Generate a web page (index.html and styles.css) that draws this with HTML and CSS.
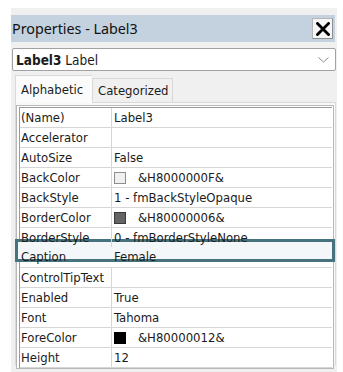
FILE: index.html
```html
<!DOCTYPE html>
<html>
<head>
<meta charset="utf-8">
<link rel="stylesheet" href="styles.css">
</head>
<body>
<div class="window">
  <div class="titlebar">
    <span class="title">Properties - Label3</span>
    <span class="close">
      <svg width="14" height="14" viewBox="0 0 14 14"><path d="M1.5 1.5 L12.5 12.5 M12.5 1.5 L1.5 12.5" stroke="#000" stroke-width="2.8" stroke-linecap="square" fill="none"/></svg>
    </span>
  </div>
  <div class="dropdown">
    <span><b>Label3</b> Label</span>
    <svg class="chev" width="11" height="6" viewBox="0 0 11 6"><polyline points="0.5,0.5 5.5,5 10.5,0.5" fill="none" stroke="#8a8a8a" stroke-width="1"/></svg>
  </div>
  <div class="tabs">
    <span class="tab active">Alphabetic</span>
    <span class="tab">Categorized</span>
  </div>
  <div class="tabpage">
    <div class="frame">
      <div class="grid">
        <div class="row"><span class="k">(Name)</span><span class="v">Label3</span></div>
        <div class="row"><span class="k">Accelerator</span><span class="v"></span></div>
        <div class="row"><span class="k">AutoSize</span><span class="v">False</span></div>
        <div class="row"><span class="k">BackColor</span><span class="v"><i class="sw sw-light"></i>&amp;H8000000F&amp;</span></div>
        <div class="row"><span class="k">BackStyle</span><span class="v">1 - fmBackStyleOpaque</span></div>
        <div class="row"><span class="k">BorderColor</span><span class="v"><i class="sw sw-dark"></i>&amp;H80000006&amp;</span></div>
        <div class="row"><span class="k">BorderStyle</span><span class="v">0 - fmBorderStyleNone</span></div>
        <div class="row sel"><span class="k">Caption</span><span class="v">Female</span></div>
        <div class="row"><span class="k">ControlTipText</span><span class="v"></span></div>
        <div class="row"><span class="k">Enabled</span><span class="v">True</span></div>
        <div class="row"><span class="k">Font</span><span class="v">Tahoma</span></div>
        <div class="row"><span class="k">ForeColor</span><span class="v"><i class="sw sw-black"></i>&amp;H80000012&amp;</span></div>
        <div class="row"><span class="k">Height</span><span class="v">12</span></div>
      </div>
    </div>
  </div>
</div>
</body>
</html>
```
FILE: styles.css
```css
html, body {
  margin: 0;
  padding: 0;
  background: #ffffff;
  width: 343px;
  height: 372px;
  overflow: hidden;
}
.window {
  margin: 8px 0 0 11px;
  width: 326px;
  height: 364px;
  background: #f0f0f0;
  padding-top: 7px;
  box-sizing: border-box;
  font-family: "DejaVu Sans Condensed", "DejaVu Sans", sans-serif;
  font-stretch: condensed;
  font-size: 13px;
  color: #1b1b1b;
}
.titlebar {
  width: 324px;
  height: 27px;
  background: #c3d2de;
  display: flex;
  align-items: center;
  justify-content: space-between;
  padding: 0 2px 0 1px;
  box-sizing: border-box;
}
.title {
  font-family: "Noto Sans", "Open Sans", sans-serif;
  font-stretch: normal;
  font-size: 14.3px;
  color: #111;
}
.close {
  width: 21px;
  height: 21px;
  box-sizing: border-box;
  background: #f6f6f6;
  border: 1px solid #b5b5b5;
  border-right-color: #8e8e8e;
  border-bottom-color: #8e8e8e;
  display: flex;
  align-items: center;
  justify-content: center;
}
.dropdown {
  margin: 6px 0 0 1px;
  width: 324px;
  height: 23px;
  box-sizing: border-box;
  background: #fff;
  border: 1px solid #a2a2a2;
  border-radius: 2px;
  display: flex;
  align-items: center;
  justify-content: space-between;
  padding: 0 6px 0 3px;
  font-size: 13.5px;
}
.dropdown b { font-weight: bold; }
.chev { display: block; margin-top: 1px; }
.tabs {
  height: 31px;
  display: flex;
  align-items: flex-end;
  padding-left: 4px;
  position: relative;
  z-index: 1;
}
.tab {
  height: 24px;
  display: flex;
  align-items: center;
  box-sizing: border-box;
  padding: 0 5px;
  border: 1px solid #d9d9d9;
  border-bottom: none;
  background: #f0f0f0;
  width: 81px;
}
.tab.active {
  height: 28px;
  width: 77px;
  background: #fbfbfb;
  padding-left: 5px;
  margin-bottom: -1px;
  border-right: none;
}
.tabpage {
  margin-left: 4px;
  width: 321px;
  height: 263px;
  box-sizing: border-box;
  border: 1px solid #d9d9d9;
  border-bottom: none;
  background: #f8f8f8;
  padding-top: 2px;
}
.frame {
  width: 318px;
  box-sizing: border-box;
  border: 1px solid #b8b8b8;
  padding: 1px 1px 0 2px;
  background: #fff;
}
.grid {
  border-left: 1px solid #9a9a9a;
  border-top: 1px solid #9a9a9a;
  background: #fff;
}
.row {
  display: grid;
  grid-template-columns: 92px 1fr;
  height: 20px;
  box-sizing: border-box;
  border-bottom: 1px solid #d6d6d6;
  position: relative;
}
.k, .v {
  display: flex;
  align-items: center;
  white-space: nowrap;
  overflow: hidden;
  position: relative;
  z-index: 2;
}
.k {
  padding-left: 1px;
  border-right: 1px solid #d6d6d6;
}
.v {
  padding-left: 2px;
}
.sw {
  display: inline-block;
  width: 12px;
  height: 12px;
  box-sizing: border-box;
  margin-right: 12px;
}
.sw-light { background: #f0f0f0; border: 1px solid #8d8d8d; }
.sw-dark { background: #646464; border: 1px solid #3a3a3a; }
.sw-black { background: #000; border: 1px solid #000; }
.row.sel .k { border-right-color: transparent; }
.row.sel .k, .row.sel .v { padding-bottom: 3px; }
.row.sel::before {
  content: "";
  position: absolute;
  left: -5px;
  right: -3px;
  top: -9px;
  height: 23px;
  box-sizing: border-box;
  border: 3px solid #47737f;
  background: #f4f7f9;
  z-index: 1;
}
```
